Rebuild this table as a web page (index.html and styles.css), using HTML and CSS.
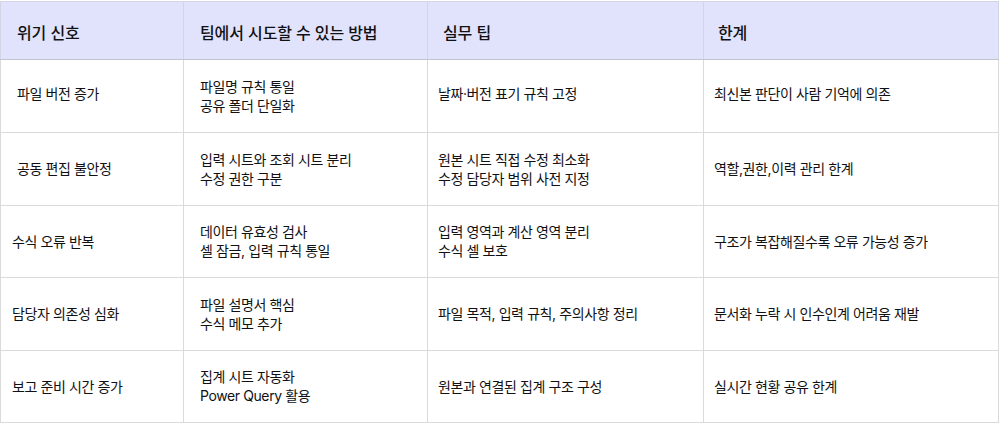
FILE: index.html
```html
<!DOCTYPE html>
<html lang="ko">
<head>
<meta charset="utf-8">
<link rel="stylesheet" href="styles.css">
</head>
<body>
<table class="grid">
  <colgroup>
    <col class="c1"><col class="c2"><col class="c3"><col class="c4">
  </colgroup>
  <thead>
    <tr class="head">
      <th class="h1">위기 신호</th>
      <th class="h2">팀에서 시도할 수 있는 방법</th>
      <th class="h3">실무 팁</th>
      <th class="h4">한계</th>
    </tr>
  </thead>
  <tbody>
    <tr>
      <td class="sig indent raise">파일 버전 증가</td>
      <td class="way">파일명 규칙 통일<br>공유 폴더 단일화</td>
      <td class="tip raise">날짜·버전 표기 규칙 고정</td>
      <td class="lim raise">최신본 판단이 사람 기억에 의존</td>
    </tr>
    <tr>
      <td class="sig indent">공동 편집 불안정</td>
      <td class="way">입력 시트와 조회 시트 분리<br>수정 권한 구분</td>
      <td class="tip">원본 시트 직접 수정 최소화<br>수정 담당자 범위 사전 지정</td>
      <td class="lim">역할,권한,이력 관리 한계</td>
    </tr>
    <tr class="short">
      <td class="sig">수식 오류 반복</td>
      <td class="way">데이터 유효성 검사<br>셀 잠금, 입력 규칙 통일</td>
      <td class="tip">입력 영역과 계산 영역 분리<br>수식 셀 보호</td>
      <td class="lim">구조가 복잡해질수록 오류 가능성 증가</td>
    </tr>
    <tr>
      <td class="sig">담당자 의존성 심화</td>
      <td class="way">파일 설명서 핵심<br>수식 메모 추가</td>
      <td class="tip">파일 목적, 입력 규칙, 주의사항 정리</td>
      <td class="lim">문서화 누락 시 인수인계 어려움 재발</td>
    </tr>
    <tr class="short">
      <td class="sig">보고 준비 시간 증가</td>
      <td class="way">집계 시트 자동화<br>Power Query 활용</td>
      <td class="tip">원본과 연결된 집계 구조 구성</td>
      <td class="lim">실시간 현황 공유 한계</td>
    </tr>
  </tbody>
</table>
</body>
</html>
```

FILE: styles.css
```css
html, body {
  margin: 0;
  padding: 0;
  background: #ffffff;
}

body {
  font-family: Inter, "Noto Sans CJK KR", sans-serif;
  color: #111113;
}

.grid {
  border-collapse: collapse;
  width: 998px;
  table-layout: fixed;
  margin-top: 1px;
}

.c1 { width: 183px; }
.c2 { width: 244px; }
.c3 { width: 276px; }
.c4 { width: 295px; }

.grid th,
.grid td {
  border: 1px solid #dadada;
  text-align: left;
  vertical-align: middle;
}

.head {
  height: 58px;
  background: #e1e3fc;
}

.head th {
  font-size: 16px;
  font-weight: 500;
  letter-spacing: -0.1px;
  border-color: #d4d5e4;
  border-bottom-color: #c2c3cc;
  padding: 2px 10px 0 16px;
}

.head .h3 { padding-left: 15px; }
.head .h4 { padding-left: 14px; }

tbody tr {
  height: 73px;
}

tbody tr.short {
  height: 72px;
}

tbody td {
  font-size: 14px;
  line-height: 19px;
  letter-spacing: -0.4px;
  padding: 0 10px 1px 11px;
}

tbody td.raise { padding-bottom: 5px; }
tbody td.indent { padding-left: 16px; }
tbody td.way { padding-left: 16px; }
tbody td.tip { padding-left: 10px; }
tbody td.lim { padding-left: 10px; }
```
